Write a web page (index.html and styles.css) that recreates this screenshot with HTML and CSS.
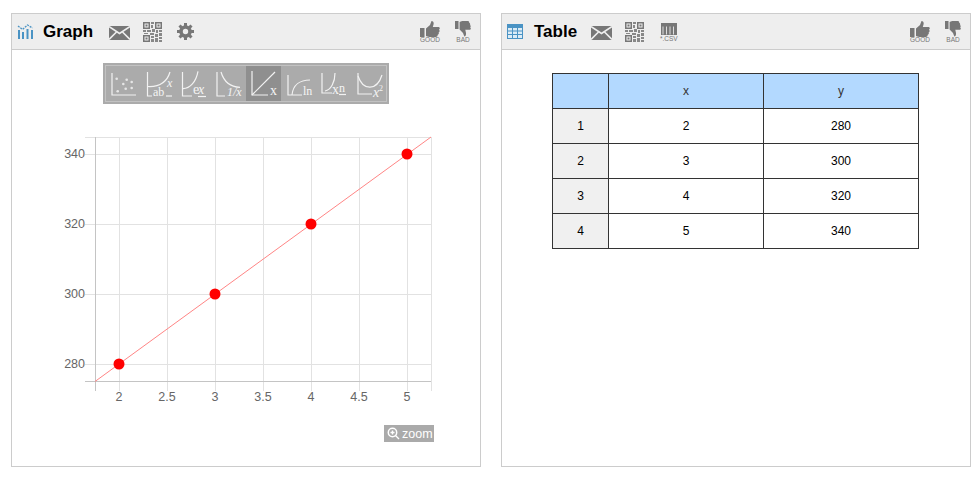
FILE: index.html
```html
<!DOCTYPE html>
<html>
    <head>
        <meta charset="UTF-8">
        <meta name="viewport" content="width=device-width, initial-scale=1.0">
        <title>Graph and Table</title>
        <link rel="stylesheet" href="styles.css">
    </head>
    <body>
        <svg class="defs" width="0" height="0">
            <symbol id="mail" viewBox="0 0 21 14">
                <rect width="21" height="14" fill="#777"/>
                <path d="M0 0.5 L10.5 7.5 L21 0.5 M0 13.5 L7.5 6 M21 13.5 L13.5 6" fill="none" stroke="#eee" stroke-width="1.6"/>
            </symbol>
            <symbol id="qr" viewBox="0 0 19 20">
                <path d="M0 0h7v7h-7z M1.5 1.5v4h4v-4z M12 0h7v7h-7z M13.5 1.5v4h4v-4z M0 13h7v7h-7z M1.5 14.5v4h4v-4z M2.5 2.5h2v2h-2z M14.5 2.5h2v2h-2z M2.5 15.5h2v2h-2z" fill="#777" fill-rule="evenodd"/>
                <path d="M8 0h3v2h-3z M8 3h2v3h-2z M0 8h3v2h-3z M4 8h4v2h-4z M9 7h3v3h-3z M13 8h2v3h-2z M16 8h3v2h-3z M1 11h4v1h-4z M7 11h4v2h-4z M16 11h3v3h-3z M8 14h3v2h-3z M12 12h3v3h-3z M12 16h3v4h-3z M16 15h3v2h-3z M8 17h3v3h-3z M16 18h3v2h-3z" fill="#888"/>
            </symbol>
            <symbol id="good" viewBox="0 0 20 16">
                <path d="M0 7h4.5v9h-4.5z M6 7.5 L10 4 L11.5 0 C13.5 0 14 2 13.5 3.5 L12.8 6 H18.2 C20.2 6 20.2 8 19 8.6 C20 9.6 19.6 11 18.6 11.4 C19.2 12.6 18.6 13.6 17.6 13.9 C17.8 15.2 17 16 15.8 16 H9.5 C7.8 16 7 15 6 15 z" fill="#777"/>
            </symbol>
            <symbol id="bad" viewBox="0 0 16 16">
                <path d="M0 0h3.5v8h-3.5z M4.6 1 C5.5 1 6 0 7.4 0 H12.6 C13.8 0 14.4 .8 14.2 1.8 C15 2.1 15.5 3 15 4 C15.8 4.4 16 5.6 15.2 6.4 C16.2 7 16 8.8 14.4 8.8 H10.3 L10.9 11.6 C11.3 13.4 10.8 15.5 9.3 15.5 L8 12 L4.6 8.4 z" fill="#777"/>
            </symbol>
        </svg>

        <!-- Graph panel -->
        <div class="panel">
            <div class="panel-head">
                <svg class="head-icon" width="17" height="15" viewBox="0 0 17 15">
                    <path d="M1 15V6h2v9z M5 15V8h2v7z M9.500 15V5h2v10z M14 15V6h2v9z" fill="#4a93c4"/>
                    <path d="M1 2 L5.500 5.500 L10.500 1 L15.500 4" fill="none" stroke="#4a93c4" stroke-width="1.300" stroke-dasharray="2 1"/>
                </svg>
                <span class="title title-graph">Graph</span>
                <svg class="icon-mail" width="21" height="14"><use href="#mail"/></svg>
                <svg class="icon-qr" width="19" height="20"><use href="#qr"/></svg>
                <svg class="icon-gear" width="17" height="17" viewBox="0 0 17 17">
                    <circle cx="8.500" cy="8.500" r="4.500" fill="none" stroke="#777" stroke-width="3.600"/>
                    <path d="M8.500 0v17 M0 8.500h17 M2.500 2.500l12 12 M14.500 2.500l-12 12" stroke="#777" stroke-width="3" stroke-dasharray="3 11 3"/>
                </svg>
                <div class="rate">
                    <div class="rate-item">
                        <svg width="20" height="16"><use href="#good"/></svg>
                        <span>GOOD</span>
                    </div>
                    <div class="rate-item">
                        <svg width="16" height="16"><use href="#bad"/></svg>
                        <span>BAD</span>
                    </div>
                </div>
            </div>

            <div class="fit-wrap">
                <div class="fit-bar">
                    <svg class="fit" viewBox="0 0 35 35">
                        <path d="M6 7V29H30" class="fit-axis"/>
                        <g class="fit-dots"><circle cx="10.700" cy="12.700" r="1.300"/><circle cx="20.700" cy="13.700" r="1.300"/><circle cx="25.700" cy="16" r="1.300"/><circle cx="17.300" cy="18" r="1.300"/><circle cx="11.700" cy="25.300" r="1.300"/><circle cx="19.700" cy="22.700" r="1.300"/><circle cx="25.700" cy="22" r="1.300"/></g>
                    </svg>
                    <svg class="fit" viewBox="0 0 35 35">
                        <path d="M6.500 6V30H11" class="fit-axis"/><path d="M7 20.500C18 21 26 16 29 6" class="fit-axis"/>
                        <text x="12" y="30" class="fit-text fit-mid">ab</text><text x="26" y="21" class="fit-text fit-mid fit-ital">x</text><path d="M25 30h6" class="fit-axis"/>
                    </svg>
                    <svg class="fit" viewBox="0 0 35 35">
                        <path d="M6.500 6V30H16" class="fit-axis"/><path d="M7 22.700C14 22.500 20 16 22 5.300" class="fit-axis"/>
                        <text x="17" y="28" class="fit-text">e</text><text x="22" y="28" class="fit-text fit-ital">x</text><path d="M22 30.500h8" class="fit-axis"/>
                    </svg>
                    <svg class="fit" viewBox="0 0 35 35">
                        <path d="M6 6V30H14" class="fit-axis"/><path d="M10 6C13 16 19 21 29 21.300" class="fit-axis"/>
                        <text x="16" y="30" class="fit-text fit-mid fit-ital">1/x</text>
                    </svg>
                    <svg class="fit fit-on" viewBox="0 0 35 35">
                        <path d="M6 5V29H22" class="fit-axis"/><path d="M6 29L29 6" class="fit-axis"/>
                        <text x="24" y="29" class="fit-text">x</text>
                    </svg>
                    <svg class="fit" viewBox="0 0 35 35">
                        <path d="M7 9V29H21" class="fit-axis"/><path d="M11 29C12 19 19 14 29 14" class="fit-axis"/>
                        <text x="22" y="29" class="fit-text fit-mid">ln</text>
                    </svg>
                    <svg class="fit" viewBox="0 0 35 35">
                        <path d="M6 7V27H16" class="fit-axis"/><path d="M9 25C15 24 19 16 19 7" class="fit-axis"/>
                        <text x="16" y="28" class="fit-text">x</text><text x="23" y="26" class="fit-text fit-mid">n</text><path d="M23 28.500h7" class="fit-axis"/>
                    </svg>
                    <svg class="fit" viewBox="0 0 35 35">
                        <path d="M7 7V28H21" class="fit-axis"/><path d="M7 10C12 25 26 25 31 9" class="fit-axis"/>
                        <text x="22" y="31" class="fit-text fit-ital">x</text><text x="28" y="25" class="fit-text fit-tiny">2</text>
                    </svg>
                </div>
            </div>

            <div class="chart">
                <svg class="chart-svg" width="468" height="348" viewBox="12 118 468 348">
                    <g class="grid">
                        <path d="M85 154H431 M85 224H431 M85 294H431 M85 364H431 M85 137H431"/>
                        <path d="M119 137V391 M167 137V391 M215 137V391 M263 137V391 M311 137V391 M359 137V391 M407 137V391 M431 137V391"/>
                    </g>
                    <path class="axis" d="M95.500 137V391 M85 381.500H431"/>
                    <g class="y-label">
                        <text x="85" y="158">340</text>
                        <text x="85" y="228">320</text>
                        <text x="85" y="298">300</text>
                        <text x="85" y="368">280</text>
                    </g>
                    <g class="x-label">
                        <text x="119" y="401">2</text>
                        <text x="167" y="401">2.5</text>
                        <text x="215" y="401">3</text>
                        <text x="263" y="401">3.5</text>
                        <text x="311" y="401">4</text>
                        <text x="359" y="401">4.5</text>
                        <text x="407" y="401">5</text>
                    </g>
                    <path class="fit-line" d="M95 381.500L431 137"/>
                    <g class="dots">
                        <circle cx="119" cy="364" r="5.500"/>
                        <circle cx="215" cy="294" r="5.500"/>
                        <circle cx="311" cy="224" r="5.500"/>
                        <circle cx="407" cy="154" r="5.500"/>
                    </g>
                </svg>
                <div class="zoom-btn">
                    <svg width="13" height="13" viewBox="0 0 13 13">
                        <circle cx="5.500" cy="5.500" r="4.200" fill="none" stroke="#fff" stroke-width="1.500"/>
                        <path d="M8.500 8.500L12 12 M3.500 5.500h4 M5.500 3.500v4" fill="none" stroke="#fff" stroke-width="1.400"/>
                    </svg>
                    <span>zoom</span>
                </div>
            </div>
        </div>

        <!-- Table panel -->
        <div class="panel">
            <div class="panel-head">
                <svg class="head-icon" width="16" height="15" viewBox="0 0 16 15">
                    <rect width="16" height="15" fill="#4a93c4"/>
                    <path d="M1 4h4v2.500h-4z M6 4h4v2.500h-4z M11 4h4v2.500h-4z M1 7.500h4v2.500h-4z M6 7.500h4v2.500h-4z M11 7.500h4v2.500h-4z M1 11h4v3h-4z M6 11h4v3h-4z M11 11h4v3h-4z" fill="#dcecf6"/>
                </svg>
                <span class="title title-table">Table</span>
                <svg class="icon-mail" width="21" height="14"><use href="#mail"/></svg>
                <svg class="icon-qr" width="19" height="20"><use href="#qr"/></svg>
                <div class="csv">
                    <svg width="16" height="12" viewBox="0 0 16 12">
                        <rect width="16" height="12" fill="#777"/>
                        <path d="M2 3.500v8 M5.500 3.500v8 M9 3.500v8 M12.500 3.500v8" stroke="#ddd" stroke-width="1"/>
                    </svg>
                    <span>*.CSV</span>
                </div>
                <div class="rate">
                    <div class="rate-item">
                        <svg width="20" height="16"><use href="#good"/></svg>
                        <span>GOOD</span>
                    </div>
                    <div class="rate-item">
                        <svg width="16" height="16"><use href="#bad"/></svg>
                        <span>BAD</span>
                    </div>
                </div>
            </div>

            <table class="data">
                <tr class="data-head"><th></th><th>x</th><th>y</th></tr>
                <tr><td class="row-no">1</td><td>2</td><td>280</td></tr>
                <tr><td class="row-no">2</td><td>3</td><td>300</td></tr>
                <tr><td class="row-no">3</td><td>4</td><td>320</td></tr>
                <tr><td class="row-no">4</td><td>5</td><td>340</td></tr>
            </table>
        </div>
    </body>
</html>
```

FILE: styles.css
```css
* {
    box-sizing: border-box;
}

body {
    margin: 0;
    padding: 13px 6px 0 11px;
    display: flex;
    gap: 20px;
    background-color: #fff;
    font-family: "Liberation Sans", Arial, sans-serif;
    font-size: 12px;
    color: #000;
}

.defs {
    display: none;
}

.panel {
    flex: 0 0 470px;
    height: 454px;
    border: 1px solid #ccc;
}

.panel-head {
    display: flex;
    align-items: center;
    height: 36px;
    background-color: #eee;
    border-bottom: 1px solid #ccc;
    padding-left: 5px;
    padding-right: 9px;
}

.head-icon {
    flex: none;
}

.title {
    font-size: 17px;
    font-weight: bold;
}

.title-graph {
    width: 49px;
    margin-left: 9px;
}

.title-table {
    width: 41px;
    margin-left: 11px;
}

.icon-mail {
    margin-left: 17px;
    margin-top: 2px;
}

.title-table + .icon-mail {
    margin-left: 16px;
}

.icon-qr {
    margin-left: 13px;
}

.icon-gear {
    margin-left: 15px;
}

.csv {
    margin-left: 16px;
    display: flex;
    flex-direction: column;
    align-items: center;
    margin-top: 2px;
    color: #777;
    font-size: 6.500px;
    line-height: 7px;
}

.rate {
    margin-left: auto;
    display: flex;
    gap: 15px;
}

.rate-item {
    display: flex;
    flex-direction: column;
    align-items: center;
    width: 20px;
    font-size: 6.500px;
    line-height: 6px;
    color: #777;
    padding-top: 1px;
}

.rate-item + .rate-item {
    width: 16px;
}

.fit-wrap {
    display: flex;
    justify-content: center;
    padding-top: 13px;
}

.fit-bar {
    display: flex;
    background-color: #ababab;
    border: 2px solid #ababab;
    box-shadow: inset 0 0 0 1px #c2c2c2;
    padding: 1px;
}

.fit {
    display: block;
    width: 35px;
    height: 35px;
}

.fit-on {
    background-color: #8f8f8f;
}

.fit-axis {
    fill: none;
    stroke: #f2f2f2;
    stroke-width: 1.200;
}

.fit-dots {
    fill: #e6e6e6;
}

.fit-text {
    font-family: "Liberation Serif", serif;
    font-size: 14px;
    fill: #f4f4f4;
}

.fit-mid {
    font-size: 12px;
}

.fit-ital {
    font-style: italic;
}

.fit-tiny {
    font-size: 8px;
}

.chart {
    position: relative;
}

.chart-svg {
    display: block;
    margin-top: 14px;
}

.grid path {
    fill: none;
    stroke: #e2e2e2;
    stroke-width: 1;
    shape-rendering: crispEdges;
}

.axis {
    fill: none;
    stroke: #c4c4c4;
    stroke-width: 1;
    shape-rendering: crispEdges;
}

.y-label text {
    font-size: 12.500px;
    fill: #666;
    text-anchor: end;
}

.x-label text {
    font-size: 12.500px;
    fill: #666;
    text-anchor: middle;
}

.fit-line {
    fill: none;
    stroke: #ff8585;
    stroke-width: 1;
}

.dots circle {
    fill: #f00;
}

.zoom-btn {
    position: absolute;
    left: 372px;
    top: 307px;
    width: 50px;
    height: 17px;
    display: flex;
    align-items: center;
    gap: 2px;
    padding-left: 3px;
    background-color: #aaa;
    color: #fff;
    font-size: 12.500px;
}

.data {
    border-collapse: collapse;
    margin: 23px 0 0 50px;
    table-layout: fixed;
    width: 367px;
}

.data th,
.data td {
    border: 1px solid #333;
    height: 35px;
    padding: 0;
    text-align: center;
    font-size: 12px;
    font-weight: normal;
}

.data th:first-child {
    width: 56px;
}

.data-head th {
    background-color: #b3d9ff;
    color: #333;
}

.row-no {
    background-color: #f0f0f0;
}
```
